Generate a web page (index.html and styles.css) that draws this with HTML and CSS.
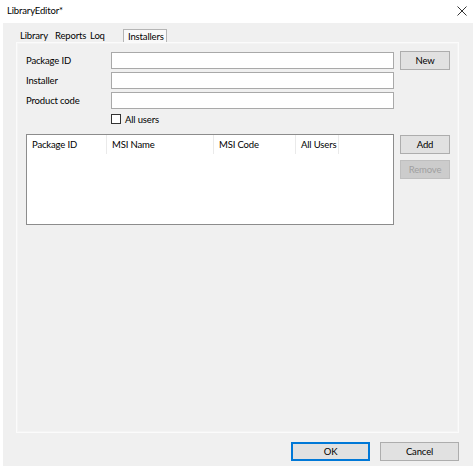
FILE: index.html
```html
<!DOCTYPE html>
<html>
<head>
<meta charset="utf-8">
<link rel="stylesheet" href="styles.css">
</head>
<body>
<div class="window">
  <div class="titlebar">
    <span class="title">LibraryEditor*</span>
    <svg class="close" width="10" height="10" viewBox="0 0 10 10"><path d="M0.5 0.5 L9.5 9.5 M9.5 0.5 L0.5 9.5" stroke="#333" stroke-width="1" fill="none"/></svg>
  </div>
  <div class="client">
    <div class="tabstrip">
      <span class="tab t1">Library</span>
      <span class="tab t2">Reports</span>
      <span class="tab t3">Loq</span>
      <span class="tab sel">Installers</span>
    </div>
    <div class="page">
      <div class="leftcol">
        <div class="frow"><span class="label">Package ID</span><div class="textbox"></div></div>
        <div class="frow"><span class="label">Installer</span><div class="textbox"></div></div>
        <div class="frow"><span class="label">Product code</span><div class="textbox"></div></div>
        <div class="checkrow"><span class="checkbox"></span><span class="checklabel">All users</span></div>
        <div class="listview">
          <div class="lvheader">
            <span class="col c1">Package ID</span>
            <span class="col c2">MSI Name</span>
            <span class="col c3">MSI Code</span>
            <span class="col c4">All Users</span>
          </div>
        </div>
      </div>
      <div class="rightcol">
        <div class="btn side">New</div>
        <div class="btn side add">Add</div>
        <div class="btn side disabled">Remove</div>
      </div>
    </div>
    <div class="bottom">
      <div class="btn dlg default">OK</div>
      <div class="btn dlg">Cancel</div>
    </div>
  </div>
</div>
</body>
</html>
```
FILE: styles.css
```css
html, body {
  margin: 0;
  padding: 0;
  background: #ffffff;
}
body {
  font-family: Lato, "Noto Sans", "Liberation Sans", sans-serif;
  font-size: 9.5px;
  letter-spacing: -0.15px;
  color: #000;
}
.window {
  width: 474px;
  height: 468px;
  box-sizing: border-box;
  background: #ffffff;
}
.titlebar {
  height: 23px;
  display: flex;
  align-items: center;
  justify-content: space-between;
  padding: 0 7px 0 7px;
  box-sizing: border-box;
}
.title {
  position: relative;
  top: -1px;
}
.close {
  position: relative;
  top: -1px;
}
.client {
  margin-left: 3px;
  width: 470px;
  height: 443px;
  background: #f0f0f0;
  box-sizing: border-box;
  padding: 6px 14px 5px 13px;
  display: flex;
  flex-direction: column;
}
.tabstrip {
  height: 13px;
  display: flex;
  align-items: stretch;
}
.tab {
  display: flex;
  align-items: center;
  box-sizing: border-box;
  padding-left: 4px;
  white-space: nowrap;
}
.t1 { width: 35px; }
.t2 { width: 35px; }
.t3 { width: 33px; }
.tab.sel {
  width: 44px;
  margin-left: 4px;
  padding-left: 4px;
  border: 1px solid #b5b5b5;
  border-bottom: none;
  background: #f9f9f9;
}
.page {
  width: 443px;
  height: 391px;
  box-sizing: border-box;
  border: 1px solid #fbfbfb;
  box-shadow: inset 0 0 0 1px #f4f4f4;
  padding: 9px 0 0 9px;
  display: flex;
}
.leftcol {
  width: 368px;
  display: flex;
  flex-direction: column;
}
.frow {
  display: flex;
  align-items: center;
  height: 17px;
  margin-bottom: 3px;
}
.label {
  width: 85px;
}
.textbox {
  width: 283px;
  height: 17px;
  box-sizing: border-box;
  background: #fff;
  border: 1px solid #a9a9a9;
}
.checkrow {
  display: flex;
  align-items: center;
  margin-left: 85px;
  margin-top: 2px;
  height: 10px;
}
.checkbox {
  width: 10px;
  height: 10px;
  box-sizing: border-box;
  border: 1px solid #333;
  background: #fff;
}
.checklabel {
  margin-left: 4px;
}
.listview {
  margin-top: 10px;
  width: 368px;
  height: 91px;
  box-sizing: border-box;
  border: 1px solid #8c8c8c;
  background: #fff;
}
.lvheader {
  display: flex;
  height: 19px;
}
.col {
  display: flex;
  align-items: center;
  box-sizing: border-box;
  padding-left: 5px;
  border-right: 1px solid #eaeaea;
  white-space: nowrap;
}
.c1 { width: 80px; }
.c2 { width: 107px; }
.c3 { width: 82px; }
.c4 { width: 43px; }
.rightcol {
  margin-left: 6px;
  display: flex;
  flex-direction: column;
  margin-top: -1px;
}
.btn {
  display: flex;
  align-items: center;
  justify-content: center;
  box-sizing: border-box;
  background: #e1e1e1;
  border: 1px solid #adadad;
}
.side {
  width: 50px;
  height: 19px;
}
.add {
  margin-top: 65px;
}
.disabled {
  margin-top: 6px;
  background: #cccccc;
  border-color: #bfbfbf;
  color: #a0a0a0;
}
.bottom {
  display: flex;
  justify-content: flex-end;
  margin-top: 9px;
  gap: 10px;
}
.dlg {
  width: 79px;
  height: 19px;
}
.default {
  border: 1px solid #0078d7;
  box-shadow: inset 0 0 0 1px #0078d7;
}
```
